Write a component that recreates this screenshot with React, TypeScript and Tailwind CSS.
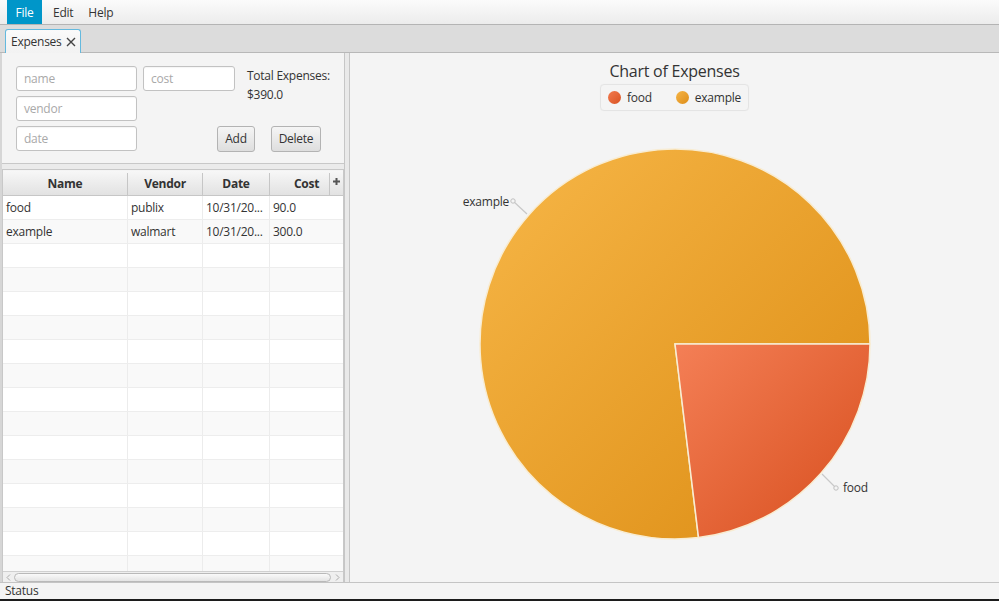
import React from "react"

const rows: string[][] = [
  ["food", "publix", "10/31/20...", "90.0"],
  ["example", "walmart", "10/31/20...", "300.0"],
]

function Field({ placeholder, w }: { placeholder: string; w: string }) {
  return (
    <div className={`${w} h-[25px] rounded-[3px] border border-[#c2c2c2] bg-white px-[7px] text-[12px] leading-[23px] text-[#a9a9a9] shadow-[inset_0_1px_1px_rgba(0,0,0,0.04)]`}>
      {placeholder}
    </div>
  )
}

function Btn({ children, w }: { children: React.ReactNode; w: string }) {
  return (
    <div className={`${w} flex h-[26px] items-center justify-center rounded-[3px] border border-[#b3b3b3] bg-gradient-to-b from-[#f5f5f5] to-[#dedede] text-[12px] text-[#333]`}>
      {children}
    </div>
  )
}

function Pie() {
  // center (325,233), r=195; food = 90/390 of the circle, starting at 3 o'clock, clockwise
  const cx = 325
  const cy = 233
  const r = 195
  const a = (90 / 390) * Math.PI * 2
  const ex = cx + r * Math.cos(a)
  const ey = cy + r * Math.sin(a)
  return (
    <svg width="649" height="471" viewBox="0 0 649 471" className="block">
      <defs>
        <linearGradient id="gEx" x1="0" y1="0" x2="1" y2="1">
          <stop offset="0" stopColor="#f7b748" />
          <stop offset="1" stopColor="#dc8c13" />
        </linearGradient>
        <linearGradient id="gFood" x1="0" y1="0" x2="1" y2="1">
          <stop offset="0" stopColor="#f47f56" />
          <stop offset="1" stopColor="#d74e1d" />
        </linearGradient>
      </defs>
      <path
        d={`M${cx},${cy} L${ex},${ey} A${r},${r} 0 1,1 ${cx + r},${cy} Z`}
        fill="url(#gEx)"
        stroke="#f8ecd2"
        strokeWidth="1.5"
      />
      <path
        d={`M${cx},${cy} L${cx + r},${cy} A${r},${r} 0 0,1 ${ex},${ey} Z`}
        fill="url(#gFood)"
        stroke="#f8ecd2"
        strokeWidth="1.5"
      />
      <line x1="163" y1="90" x2="177" y2="103" stroke="#c8c8c8" strokeWidth="1.2" />
      <circle cx="163" cy="90" r="2.2" fill="#f4f4f4" stroke="#c0c0c0" strokeWidth="1" />
      <text x="159" y="95" textAnchor="end" fontSize="12" letterSpacing="-0.25" fill="#333" fontFamily="Open Sans, sans-serif">
        example
      </text>
      <line x1="486" y1="377" x2="472" y2="363" stroke="#c8c8c8" strokeWidth="1.2" />
      <circle cx="486" cy="377" r="2.2" fill="#f4f4f4" stroke="#c0c0c0" strokeWidth="1" />
      <text x="493" y="381" fontSize="12" letterSpacing="-0.25" fill="#333" fontFamily="Open Sans, sans-serif">
        food
      </text>
    </svg>
  )
}

export default function App() {
  const filler = Array.from({ length: 15 })
  return (
    <div className="flex h-[601px] w-[999px] flex-col overflow-hidden bg-[#f4f4f4] font-['Open_Sans',sans-serif] text-[12px] tracking-[-0.25px] text-[#333]">
      {/* menu bar */}
      <div className="flex h-[25px] shrink-0 items-stretch border-b border-[#b4b4b4] bg-gradient-to-b from-[#fbfbfb] to-[#ececec] pl-[7px]">
        <div className="flex w-[35px] items-center justify-center bg-[#0096c9] pt-[2px] text-white">File</div>
        <div className="flex items-center pl-[11px] pt-[2px]">Edit</div>
        <div className="flex items-center pl-[15px] pt-[2px]">Help</div>
      </div>

      {/* tab bar */}
      <div className="flex h-[28px] shrink-0 items-end border-b border-[#b8b8b8] bg-[#dcdcdc] pl-[5px]">
        <div className="-mb-px flex h-[24px] w-[76px] items-center gap-[4px] rounded-t-[3px] border border-b-0 border-[#64b9de] bg-gradient-to-b from-[#fafafa] to-[#f2f2f2] pl-[5px]">
          <span>Expenses</span>
          <svg width="10" height="10" viewBox="0 0 10 10">
            <path d="M1 1L9 9M9 1L1 9" stroke="#444" strokeWidth="1.4" />
          </svg>
        </div>
      </div>

      {/* content */}
      <div className="flex h-[529px] shrink-0">
        {/* left */}
        <div className="flex w-[344px] shrink-0 flex-col border-l-2 border-[#d6d6d6]">
          <div className="h-[110px] shrink-0 pl-[14px] pt-[13px]">
            <div className="grid grid-cols-[121px_92px_1fr] grid-rows-[25px_25px_26px] gap-x-[6px] gap-y-[5px]">
              <Field placeholder="name" w="w-[121px]" />
              <Field placeholder="cost" w="w-[92px]" />
              <div className="row-span-2 pl-[6px] leading-[19px]">
                <div>Total Expenses:</div>
                <div>$390.0</div>
              </div>
              <Field placeholder="vendor" w="w-[121px]" />
              <div />
              <Field placeholder="date" w="w-[121px]" />
              <div className="col-span-2 flex gap-[16px] pl-[74px]">
                <Btn w="w-[38px]">Add</Btn>
                <Btn w="w-[50px]">Delete</Btn>
              </div>
            </div>
          </div>
          <div className="h-[7px] shrink-0 border-y border-[#c8c8c8] bg-[#ebebeb]" />
          {/* table */}
          <div className="flex min-h-0 flex-1 flex-col border-x border-[#c8c8c8] pt-px">
            <div className="flex h-[25px] shrink-0 border-b border-[#c6c6c6] bg-gradient-to-b from-[#f7f7f7] to-[#e2e2e2] pt-[2px] font-bold">
              <div className="flex w-[125px] items-center justify-center border-r border-[#c6c6c6]">Name</div>
              <div className="flex w-[75px] items-center justify-center border-r border-[#c6c6c6]">Vendor</div>
              <div className="flex w-[67px] items-center justify-center border-r border-[#c6c6c6]">Date</div>
              <div className="flex w-[60px] items-center justify-center border-r border-[#c6c6c6] pl-[14px]">Cost</div>
              <div className="flex flex-1 items-start justify-center pt-[5px] text-[#555]">
                <svg width="7" height="7" viewBox="0 0 7 7">
                  <path d="M3.5 0V7M0 3.5H7" stroke="#555" strokeWidth="2" />
                </svg>
              </div>
            </div>
            <div className="min-h-0 flex-1 overflow-hidden">
              {rows.map((r, i) => (
                <div key={i} className={`flex h-[24px] border-b border-[#ededed] ${i % 2 ? "bg-[#f9f9f9]" : "bg-white"}`}>
                  <div className="w-[125px] border-r border-[#ececec] pl-[3px] leading-[23px]">{r[0]}</div>
                  <div className="w-[75px] border-r border-[#ececec] pl-[3px] leading-[23px]">{r[1]}</div>
                  <div className="w-[67px] border-r border-[#ececec] pl-[3px] leading-[23px]">{r[2]}</div>
                  <div className="w-[60px] pl-[3px] leading-[23px]">{r[3]}</div>
                </div>
              ))}
              {filler.map((_, i) => (
                <div key={i} className={`flex h-[24px] border-b border-[#ededed] ${(i + 2) % 2 ? "bg-[#f9f9f9]" : "bg-white"}`}>
                  <div className="w-[125px] border-r border-[#ececec]" />
                  <div className="w-[75px] border-r border-[#ececec]" />
                  <div className="w-[67px] border-r border-[#ececec]" />
                  <div className="w-[60px]" />
                </div>
              ))}
            </div>
            {/* horizontal scrollbar */}
            <div className="flex h-[11px] shrink-0 items-center border-t border-[#d0d0d0] bg-[#efefef]">
              <div className="flex w-[11px] items-center justify-center">
                <svg width="5" height="7" viewBox="0 0 5 7">
                  <path d="M4 0.5L1 3.5L4 6.5" fill="none" stroke="#aaa" strokeWidth="1" />
                </svg>
              </div>
              <div className="h-[9px] flex-1 rounded-[5px] border border-[#b9b9b9] bg-gradient-to-b from-[#fafafa] to-[#e4e4e4]" />
              <div className="flex w-[12px] items-center justify-center">
                <svg width="5" height="7" viewBox="0 0 5 7">
                  <path d="M1 0.5L4 3.5L1 6.5" fill="none" stroke="#aaa" strokeWidth="1" />
                </svg>
              </div>
            </div>
          </div>
        </div>

        {/* splitter */}
        <div className="w-[6px] shrink-0 border-x border-[#c6c6c6] bg-[#e9e9e9]" />

        {/* right: chart */}
        <div className="flex w-[649px] shrink-0 flex-col items-center bg-[#f4f4f4]">
          <div className="flex h-[31px] items-end pb-[2px] text-[16px] leading-[22px]">Chart of Expenses</div>
          <div className="flex h-[27px] items-center gap-[10px] rounded-[4px] border border-[#e4e4e4] px-[7px] shadow-[0_0_1px_rgba(0,0,0,0.05)]">
            <div className="flex items-center gap-[6px]">
              <span className="h-[13px] w-[13px] rounded-full bg-gradient-to-br from-[#f27a4e] to-[#d9521f]" />
              <span>food</span>
            </div>
            <div className="flex items-center gap-[6px] pl-[14px]">
              <span className="h-[13px] w-[13px] rounded-full bg-gradient-to-br from-[#f6b545] to-[#dd8d14]" />
              <span>example</span>
            </div>
          </div>
          <Pie />
        </div>
      </div>

      {/* status */}
      <div className="flex h-[17px] shrink-0 items-center border-t border-[#c4c4c4] bg-[#f4f4f4] pl-[5px]">Status</div>
      <div className="h-[2px] shrink-0 bg-[#1c1c1c]" />
    </div>
  )
}
